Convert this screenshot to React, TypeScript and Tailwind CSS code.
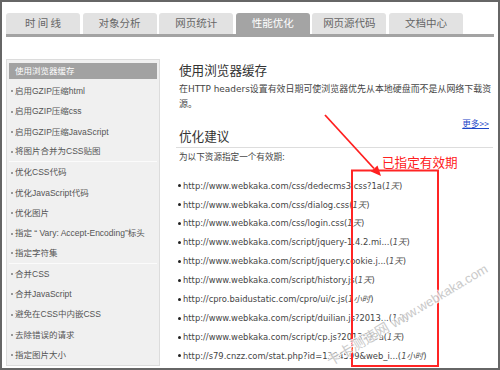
import React from "react";

const tabs = ["时 间 线", "对象分析", "网页统计", "性能优化", "网页源代码", "文档中心"];

const side: { t: string; sep?: boolean }[] = [
  { t: "使用浏览器缓存" },
  { t: "启用GZIP压缩html" },
  { t: "启用GZIP压缩css" },
  { t: "启用GZIP压缩JavaScript" },
  { t: "将图片合并为CSS贴图", sep: true },
  { t: "优化CSS代码" },
  { t: "优化JavaScript代码" },
  { t: "优化图片" },
  { t: "指定 “ Vary: Accept-Encoding”标头" },
  { t: "指定字符集", sep: true },
  { t: "合并CSS" },
  { t: "合并JavaScript" },
  { t: "避免在CSS中内嵌CSS" },
  { t: "去除错误的请求" },
  { t: "指定图片大小" },
];

const urls: [string, string][] = [
  ["http://www.webkaka.com/css/dedecms3.css?1a", "1天"],
  ["http://www.webkaka.com/css/dialog.css", "1天"],
  ["http://www.webkaka.com/css/login.css", "1天"],
  ["http://www.webkaka.com/script/jquery-1.4.2.mi...", "1天"],
  ["http://www.webkaka.com/script/jquery.cookie.j...", "1天"],
  ["http://www.webkaka.com/script/history.js", "1天"],
  ["http://cpro.baidustatic.com/cpro/ui/c.js", "1小时"],
  ["http://www.webkaka.com/script/duilian.js?2013...", "1天"],
  ["http://www.webkaka.com/script/cp.js?2013922a", "1天"],
  ["http://s79.cnzz.com/stat.php?id=1394599&web_i...", "1小时"],
];

const cjk = { fontFamily: '"Noto Sans CJK SC", sans-serif' };
const mixed = { fontFamily: '"DejaVu Sans", "Noto Sans CJK SC", sans-serif' };
const sideFont = { fontFamily: '"Liberation Sans", "Noto Sans CJK SC", sans-serif' };

export default function App() {
  return (
    <div className="relative w-[500px] h-[370px] overflow-hidden border-2 border-[#666] bg-white flex flex-col pl-[4px] pr-[3px] pt-[11px]">
      {/* tabs */}
      <div className="flex gap-[2.6px] h-[20.5px]" style={cjk}>
        {tabs.map((t, i) => (
          <div
            key={t}
            className={
              "w-[74px] h-full rounded-t-[3px] flex items-center justify-center text-[10.5px] leading-none " +
              (i === 3 ? "bg-[#a4a4a4] text-white" : "bg-[#e2e2e2] text-[#666]")
            }
          >
            {t}
          </div>
        ))}
      </div>
      <div className="h-[3.5px] bg-[#a3a3a3] mr-[1px]" />

      <div className="flex mt-[22px]">
        {/* sidebar */}
        <div className="w-[154px] h-[307px] shrink-0 border border-[#dcdcdc] bg-[#f0f0f0] px-[2px] pt-[1px]" style={sideFont}>
          {side.map((s, i) => (
            <div
              key={s.t}
              className={
                "h-[20.3px] flex items-center " + (s.sep ? "border-b border-[#fbfbfb]" : "")
              }
            >
              {i === 0 ? (
                <div className="w-full h-[16px] bg-[#a2a2a2] text-white text-[8.5px] leading-[16px] pl-[6px] whitespace-nowrap">
                  {s.t}
                </div>
              ) : (
                <div className="flex items-center pl-[2px] text-[8.5px] text-[#555] whitespace-nowrap">
                  <span className="w-[2px] h-[2px] bg-[#999] mr-[2px]" />
                  {s.t}
                </div>
              )}
            </div>
          ))}
        </div>

        {/* content */}
        <div className="flex-1 ml-[16px] mr-[2px] flex flex-col">
          <div className="h-[22px] leading-[22px] text-[12.6px] text-[#333] pl-[3px]" style={cjk}>
            使用浏览器缓存
          </div>
          <div className="mt-[1px] flex flex-col text-[8.95px] leading-[15px] text-[#444] pl-[3px] whitespace-nowrap" style={mixed}>
            <span className="block h-[15px]">在HTTP headers设置有效日期可使浏览器优先从本地硬盘而不是从网络下载资</span>
            <span className="block h-[15px]">源。</span>
          </div>
          <div className="mt-[1px] h-[15px] leading-[15px] text-right pr-[4px]" style={cjk}>
            <span className="text-[8.6px] text-[#1c46c8] underline">更多&gt;&gt;</span>
          </div>
          <div className="h-[19px] leading-[16px] text-[12.6px] text-[#333] pl-[3px]" style={cjk}>
            优化建议
          </div>
          <div className="h-[1px] bg-[#dddddd]" />
          <div className="h-[16px] leading-[16px] text-[8.6px] text-[#444] pl-[3px]" style={cjk}>
            为以下资源指定一个有效期:
          </div>
          <div className="mt-[12.5px] flex flex-col" style={mixed}>
            {urls.map(([u, d]) => (
              <div key={u} className="h-[18.9px] flex items-center pl-[2px] text-[8.4px] text-[#444] whitespace-nowrap">
                <span className="w-[3px] h-[3px] rounded-full bg-[#222] mr-[2px] shrink-0" />
                {u}(<i className="text-[#555]">{d}</i>)
              </div>
            ))}
          </div>
        </div>
      </div>

      {/* annotations */}
      <svg
        className="absolute left-[-2px] top-[-2px] pointer-events-none"
        width="500"
        height="370"
        viewBox="0 0 500 370"
      >
        <line x1="325" y1="115" x2="374" y2="168.5" stroke="#ff1f1f" strokeWidth="1.8" />
        <polygon points="381,176 370.9,171.6 377.5,165.6" fill="#ff1f1f" />
        <rect x="352" y="170.5" width="86" height="195.5" fill="none" stroke="#ff2424" strokeWidth="2" />
      </svg>
      <span
        className="absolute left-[380px] top-[151px] text-[12.6px] leading-[18px] text-[#ff2020]"
        style={cjk}
      >
        已指定有效期
      </span>

      {/* watermark */}
      <div
        className="absolute left-[326px] top-[348px] origin-left -rotate-[31deg] whitespace-nowrap text-[#c4c4c4] opacity-90"
        style={{
          fontFamily: '"Liberation Sans", "Noto Sans CJK SC", sans-serif',
          textShadow: "1px 1px 0 #fff, -1px -1px 0 #fff, 1px -1px 0 #fff, -1px 1px 0 #fff",
        }}
      >
        <span className="text-[14px]">卡卡测速网 </span>
        <span className="text-[13px]">www.webkaka.com</span>
      </div>
    </div>
  );
}
